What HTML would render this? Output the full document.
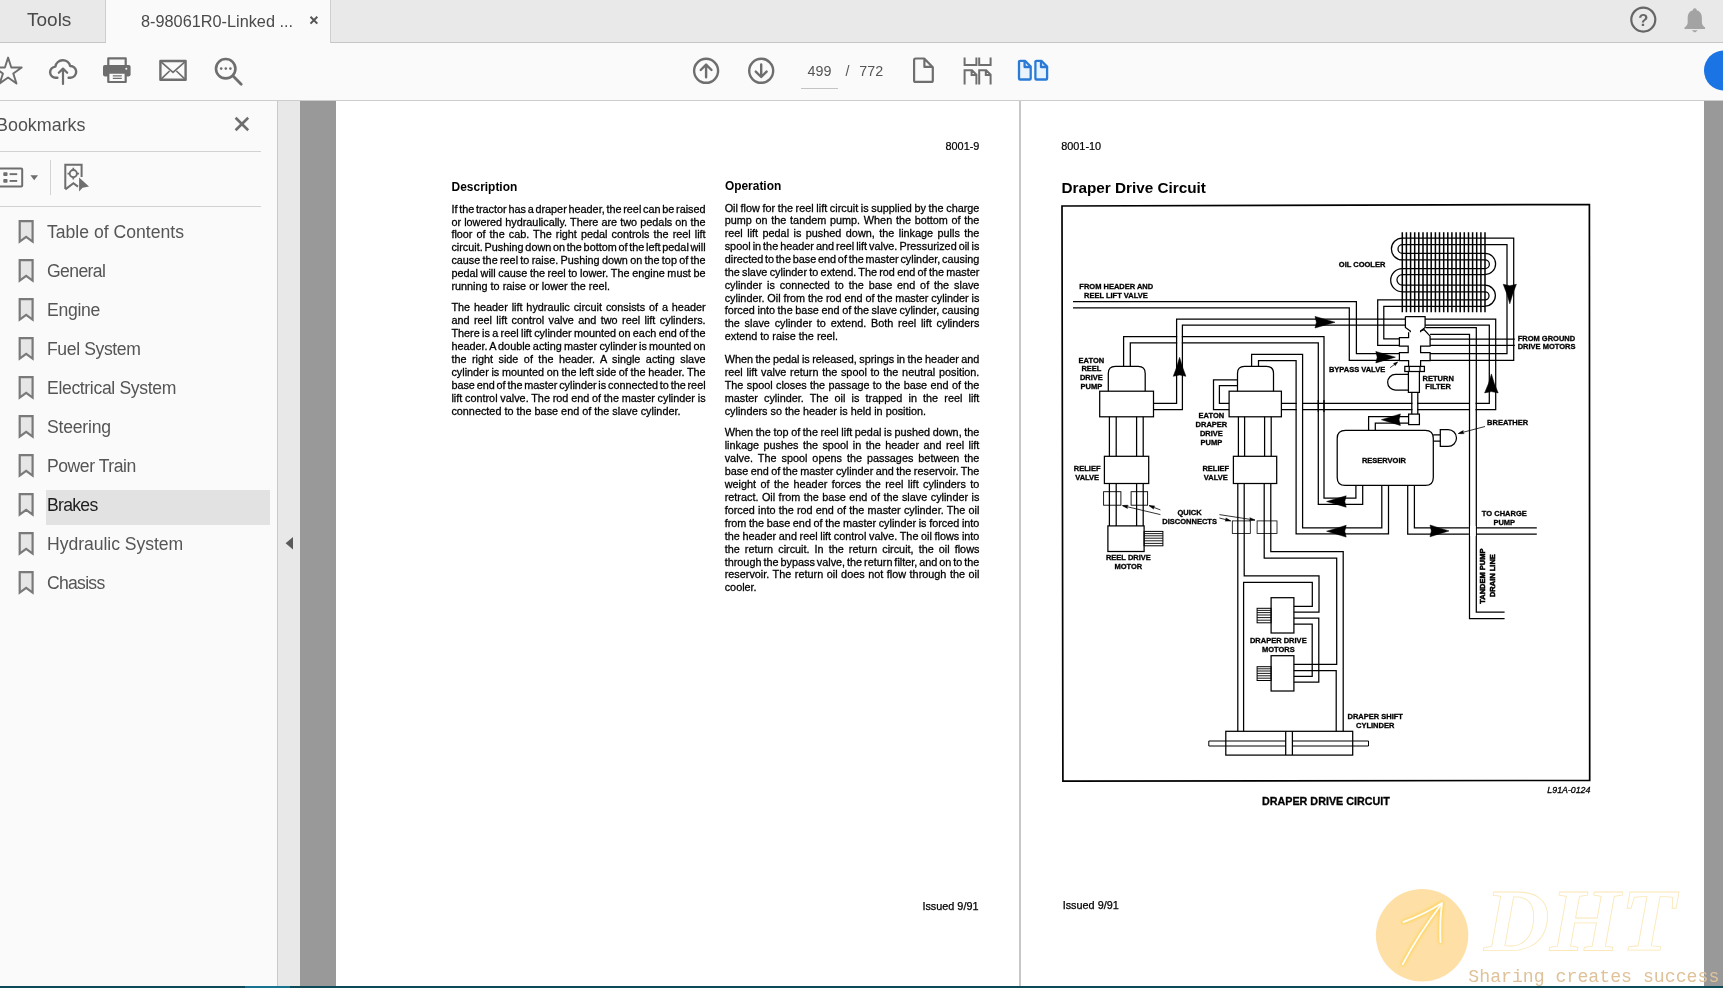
<!DOCTYPE html>
<html lang="en">
<head>
<meta charset="utf-8">
<title>8-98061R0-Linked</title>
<style>
*{box-sizing:border-box;margin:0;padding:0}
html,body{width:1723px;height:988px;overflow:hidden;background:#fff}
body{position:relative;font-family:"Liberation Sans",sans-serif;color:#4b4b4b}
.abs{position:absolute}
#tabbar{left:0;top:0;width:1723px;height:43px;background:#e9e9e9;border-bottom:1px solid #c6c6c6}
#tabTools{left:0;top:0;width:106px;height:42px;border-right:1px solid #cfcfcf}
#tabDoc{left:106px;top:0;width:225px;height:43px;background:#fafafa;border-right:1px solid #cfcfcf}
.tabtxt{white-space:pre;color:#4a4a4a}
#toolbar{left:0;top:43px;width:1723px;height:58px;background:#fafafa;border-bottom:1px solid #cdcdcd}
#side{left:0;top:101px;width:278px;height:887px;background:#fafafa;border-right:1px solid #c9c9c9}
#strip{left:278px;top:101px;width:22px;height:887px;background:#e8e8e8}
#gutL{left:300px;top:101px;width:36px;height:887px;background:#999}
#gutR{left:1704px;top:101px;width:19px;height:887px;background:#999}
#pages{left:336px;top:101px;width:1368px;height:887px;background:#fff}
#pdiv{left:1019px;top:101px;width:2px;height:887px;background:#c8c8c8}
.hr{height:1px;background:#d2d2d2;left:0;width:261px}
.bm{left:47px;font-size:17.6px;color:#555;white-space:pre;line-height:22px}
.bmi{left:18px;width:16px;height:23px}
.doc{color:#000;white-space:pre}
.ln{position:absolute;white-space:pre;color:#000;font-size:10.85px;line-height:13px;height:13px;-webkit-text-stroke:.28px #000}
#botline{left:0;top:986px;width:1723px;height:2px;background:#0d4a57}
</style>
</head>
<body>
<div id="root" class="abs" style="left:0;top:0;width:1723px;height:988px;will-change:transform;overflow:hidden">
<!-- TAB BAR -->
<div id="tabbar" class="abs"></div>
<div id="tabTools" class="abs"></div>
<div id="tabDoc" class="abs"></div>
<div class="abs tabtxt" style="left:27px;top:9px;font-size:19px;line-height:22px">Tools</div>
<div class="abs tabtxt" style="left:141px;top:11px;font-size:16.3px;line-height:20px">8-98061R0-Linked ...</div>
<!-- TOOLBAR -->
<div id="toolbar" class="abs"></div>
<div class="abs tabtxt" style="left:807.600px;top:63.300px;font-size:14.300px;line-height:17px;color:#555">499</div>
<div class="abs tabtxt" style="left:845.500px;top:63.300px;font-size:14.300px;line-height:17px;color:#555">/</div>
<div class="abs tabtxt" style="left:859.300px;top:63.300px;font-size:14.300px;line-height:17px;color:#555">772</div>
<div class="abs" style="left:800.500px;top:88px;width:37px;height:1px;background:#c4c4c4"></div>
<!-- SIDEBAR -->
<div id="side" class="abs"></div>
<div id="strip" class="abs"></div>
<div id="gutL" class="abs"></div>
<div id="pages" class="abs"></div>
<div id="pdiv" class="abs"></div>
<div id="gutR" class="abs"></div>
<div class="abs" style="left:-4px;top:114.300px;font-size:17.900px;line-height:22px;color:#505050;white-space:pre">Bookmarks</div>
<div class="abs hr" style="top:151px"></div><div class="abs hr" style="top:206px"></div>
<div class="abs" style="left:46px;top:490px;width:224px;height:35px;background:#e2e2e2"></div>
<div class="abs bm" style="top:220.8px;color:#555;letter-spacing:0.00px">Table of Contents</div><svg class="abs" style="left:17px;top:218.9px" width="19" height="26" viewBox="0 0 19 26"><path d="M2.700 2.100H15.600V22.600L9.150 17.800L2.700 22.600Z" fill="#e6e6e6" stroke="#7a7a7a" stroke-width="2.200" stroke-linejoin="miter"/></svg>
<div class="abs bm" style="top:259.8px;color:#555;letter-spacing:-0.61px">General</div><svg class="abs" style="left:17px;top:257.9px" width="19" height="26" viewBox="0 0 19 26"><path d="M2.700 2.100H15.600V22.600L9.150 17.800L2.700 22.600Z" fill="#e6e6e6" stroke="#7a7a7a" stroke-width="2.200" stroke-linejoin="miter"/></svg>
<div class="abs bm" style="top:298.8px;color:#555;letter-spacing:-0.28px">Engine</div><svg class="abs" style="left:17px;top:296.9px" width="19" height="26" viewBox="0 0 19 26"><path d="M2.700 2.100H15.600V22.600L9.150 17.800L2.700 22.600Z" fill="#e6e6e6" stroke="#7a7a7a" stroke-width="2.200" stroke-linejoin="miter"/></svg>
<div class="abs bm" style="top:337.8px;color:#555;letter-spacing:-0.39px">Fuel System</div><svg class="abs" style="left:17px;top:335.9px" width="19" height="26" viewBox="0 0 19 26"><path d="M2.700 2.100H15.600V22.600L9.150 17.800L2.700 22.600Z" fill="#e6e6e6" stroke="#7a7a7a" stroke-width="2.200" stroke-linejoin="miter"/></svg>
<div class="abs bm" style="top:376.8px;color:#555;letter-spacing:-0.35px">Electrical System</div><svg class="abs" style="left:17px;top:374.9px" width="19" height="26" viewBox="0 0 19 26"><path d="M2.700 2.100H15.600V22.600L9.150 17.800L2.700 22.600Z" fill="#e6e6e6" stroke="#7a7a7a" stroke-width="2.200" stroke-linejoin="miter"/></svg>
<div class="abs bm" style="top:415.8px;color:#555;letter-spacing:-0.21px">Steering</div><svg class="abs" style="left:17px;top:413.9px" width="19" height="26" viewBox="0 0 19 26"><path d="M2.700 2.100H15.600V22.600L9.150 17.800L2.700 22.600Z" fill="#e6e6e6" stroke="#7a7a7a" stroke-width="2.200" stroke-linejoin="miter"/></svg>
<div class="abs bm" style="top:454.8px;color:#555;letter-spacing:-0.46px">Power Train</div><svg class="abs" style="left:17px;top:452.9px" width="19" height="26" viewBox="0 0 19 26"><path d="M2.700 2.100H15.600V22.600L9.150 17.800L2.700 22.600Z" fill="#e6e6e6" stroke="#7a7a7a" stroke-width="2.200" stroke-linejoin="miter"/></svg>
<div class="abs bm" style="top:493.8px;color:#1e1e1e;letter-spacing:-0.71px">Brakes</div><svg class="abs" style="left:17px;top:491.9px" width="19" height="26" viewBox="0 0 19 26"><path d="M2.700 2.100H15.600V22.600L9.150 17.800L2.700 22.600Z" fill="#e6e6e6" stroke="#7a7a7a" stroke-width="2.200" stroke-linejoin="miter"/></svg>
<div class="abs bm" style="top:532.8px;color:#555;letter-spacing:-0.05px">Hydraulic System</div><svg class="abs" style="left:17px;top:530.9px" width="19" height="26" viewBox="0 0 19 26"><path d="M2.700 2.100H15.600V22.600L9.150 17.800L2.700 22.600Z" fill="#e6e6e6" stroke="#7a7a7a" stroke-width="2.200" stroke-linejoin="miter"/></svg>
<div class="abs bm" style="top:571.8px;color:#555;letter-spacing:-0.73px">Chasiss</div><svg class="abs" style="left:17px;top:569.9px" width="19" height="26" viewBox="0 0 19 26"><path d="M2.700 2.100H15.600V22.600L9.150 17.800L2.700 22.600Z" fill="#e6e6e6" stroke="#7a7a7a" stroke-width="2.200" stroke-linejoin="miter"/></svg>

<div class="abs doc" style="left:451.6px;top:180.2px;font-size:11.95px;line-height:14px;font-weight:bold">Description</div>
<div class="abs doc" style="left:945.5px;top:139.9px;font-size:10.9px;-webkit-text-stroke:.2px #000;line-height:13px">8001-9</div>
<div class="ln" style="left:451.4px;top:202.70px;word-spacing:-1.277px">If the tractor has a draper header, the reel can be raised</div>
<div class="ln" style="left:451.4px;top:215.55px;word-spacing:0.103px">or lowered hydraulically. There are two pedals on the</div>
<div class="ln" style="left:451.4px;top:228.40px;word-spacing:1.028px">floor of the cab. The right pedal controls the reel lift</div>
<div class="ln" style="left:451.4px;top:241.25px;word-spacing:-1.283px">circuit. Pushing down on the bottom of the left pedal will</div>
<div class="ln" style="left:451.4px;top:254.10px;word-spacing:-0.730px">cause the reel to raise. Pushing down on the top of the</div>
<div class="ln" style="left:451.4px;top:266.95px;word-spacing:-0.360px">pedal will cause the reel to lower. The engine must be</div>
<div class="ln" style="left:451.4px;top:279.80px;word-spacing:0.000px">running to raise or lower the reel.</div>
<div class="ln" style="left:451.4px;top:301.20px;word-spacing:0.884px">The header lift hydraulic circuit consists of a header</div>
<div class="ln" style="left:451.4px;top:314.13px;word-spacing:1.390px">and reel lift control valve and two reel lift cylinders.</div>
<div class="ln" style="left:451.4px;top:327.06px;word-spacing:-0.674px">There is a reel lift cylinder mounted on each end of the</div>
<div class="ln" style="left:451.4px;top:339.99px;word-spacing:-0.778px">header. A double acting master cylinder is mounted on</div>
<div class="ln" style="left:451.4px;top:352.92px;word-spacing:2.456px">the right side of the header. A single acting slave</div>
<div class="ln" style="left:451.4px;top:365.85px;word-spacing:-0.361px">cylinder is mounted on the left side of the header. The</div>
<div class="ln" style="left:451.4px;top:378.78px;word-spacing:-1.224px">base end of the master cylinder is connected to the reel</div>
<div class="ln" style="left:451.4px;top:391.71px;word-spacing:-0.236px">lift control valve. The rod end of the master cylinder is</div>
<div class="ln" style="left:451.4px;top:404.64px;word-spacing:0.000px">connected to the base end of the slave cylinder.</div>
<div class="abs doc" style="left:922.4px;top:899.6px;font-size:10.85px;-webkit-text-stroke:.25px #000;line-height:13px">Issued 9/91</div>

<div class="abs doc" style="left:724.9px;top:178.9px;font-size:11.95px;line-height:14px;font-weight:bold">Operation</div>
<div class="ln" style="left:724.7px;top:201.50px;word-spacing:-0.351px">Oil flow for the reel lift circuit is supplied by the charge</div>
<div class="ln" style="left:724.7px;top:214.37px;word-spacing:0.705px">pump on the tandem pump. When the bottom of the</div>
<div class="ln" style="left:724.7px;top:227.24px;word-spacing:1.441px">reel lift pedal is pushed down, the linkage pulls the</div>
<div class="ln" style="left:724.7px;top:240.11px;word-spacing:-0.991px">spool in the header and reel lift valve. Pressurized oil is</div>
<div class="ln" style="left:724.7px;top:252.98px;word-spacing:-1.238px">directed to the base end of the master cylinder, causing</div>
<div class="ln" style="left:724.7px;top:265.85px;word-spacing:-0.732px">the slave cylinder to extend. The rod end of the master</div>
<div class="ln" style="left:724.7px;top:278.72px;word-spacing:1.909px">cylinder is connected to the base end of the slave</div>
<div class="ln" style="left:724.7px;top:291.59px;word-spacing:-0.146px">cylinder. Oil from the rod end of the master cylinder is</div>
<div class="ln" style="left:724.7px;top:304.46px;word-spacing:-0.368px">forced into the base end of the slave cylinder, causing</div>
<div class="ln" style="left:724.7px;top:317.33px;word-spacing:1.775px">the slave cylinder to extend. Both reel lift cylinders</div>
<div class="ln" style="left:724.7px;top:330.20px;word-spacing:0.000px">extend to raise the reel.</div>
<div class="ln" style="left:724.7px;top:353.00px;word-spacing:-0.570px">When the pedal is released, springs in the header and</div>
<div class="ln" style="left:724.7px;top:365.90px;word-spacing:0.706px">reel lift valve return the spool to the neutral position.</div>
<div class="ln" style="left:724.7px;top:378.80px;word-spacing:0.331px">The spool closes the passage to the base end of the</div>
<div class="ln" style="left:724.7px;top:391.70px;word-spacing:3.142px">master cylinder. The oil is trapped in the reel lift</div>
<div class="ln" style="left:724.7px;top:404.60px;word-spacing:0.000px">cylinders so the header is held in position.</div>
<div class="ln" style="left:724.7px;top:426.10px;word-spacing:-0.355px">When the top of the reel lift pedal is pushed down, the</div>
<div class="ln" style="left:724.7px;top:439.04px;word-spacing:1.439px">linkage pushes the spool in the header and reel lift</div>
<div class="ln" style="left:724.7px;top:451.98px;word-spacing:1.964px">valve. The spool opens the passages between the</div>
<div class="ln" style="left:724.7px;top:464.92px;word-spacing:-0.544px">base end of the master cylinder and the reservoir. The</div>
<div class="ln" style="left:724.7px;top:477.86px;word-spacing:1.444px">weight of the header forces the reel lift cylinders to</div>
<div class="ln" style="left:724.7px;top:490.80px;word-spacing:0.457px">retract. Oil from the base end of the slave cylinder is</div>
<div class="ln" style="left:724.7px;top:503.74px;word-spacing:0.173px">forced into the rod end of the master cylinder. The oil</div>
<div class="ln" style="left:724.7px;top:516.68px;word-spacing:-0.388px">from the base end of the master cylinder is forced into</div>
<div class="ln" style="left:724.7px;top:529.62px;word-spacing:-0.369px">the header and reel lift control valve. The oil flows into</div>
<div class="ln" style="left:724.7px;top:542.56px;word-spacing:2.050px">the return circuit. In the return circuit, the oil flows</div>
<div class="ln" style="left:724.7px;top:555.50px;word-spacing:-1.055px">through the bypass valve, the return filter, and on to the</div>
<div class="ln" style="left:724.7px;top:568.44px;word-spacing:0.527px">reservoir. The return oil does not flow through the oil</div>
<div class="ln" style="left:724.7px;top:581.38px;word-spacing:0.000px">cooler.</div>
<div class="abs doc" style="left:1061.2px;top:139.9px;font-size:10.9px;-webkit-text-stroke:.2px #000;line-height:13px">8001-10</div>
<div class="abs doc" style="left:1061.4px;top:179.1px;font-size:15.3px;line-height:18px;font-weight:bold">Draper Drive Circuit</div>
<div class="abs doc" style="left:1062.7px;top:898.6px;font-size:10.85px;-webkit-text-stroke:.25px #000;line-height:13px">Issued 9/91</div>

<svg class="abs" style="left:0;top:0" width="1723" height="988" viewBox="0 0 1723 988" fill="none" stroke="#000" font-family="Liberation Sans, sans-serif" font-weight="bold">
<g><path d="M1062 206L1589.4 204.5L1589.7 780.4L1062.9 781.2Z" stroke-width="1.7" />
<path d="M1123.6 366.4V336.6H1324V498.1H1355.9V485.4" stroke-width="1.25" />
<path d="M1130.3 366.4V342.9H1318.3V504.4H1362.7V485.4" stroke-width="1.25" />
<path d="M1281.4 403.4H1489.3V325.2H1425.1" stroke-width="1.25" />
<path d="M1281.4 409.6H1495.7V319H1425.1" stroke-width="1.25" />
<rect x="1296.7" y="402.0" width="5.3" height="9.0" fill="#fff" stroke="none"/>
<rect x="1412.4" y="402.0" width="4.8" height="9.0" fill="#fff" stroke="none"/>
<rect x="1469.9" y="402.0" width="5.6" height="9.0" fill="#fff" stroke="none"/>
<path d="M1324 400V412M1318.3 400V412" stroke-width="1.25" />
<path d="M1073 301.7H1356.4V353.7H1399.4" stroke-width="1.25" />
<path d="M1073 307.9H1349.3V360.3H1399.4" stroke-width="1.25" />
<rect x="1177.2" y="335.0" width="4.6" height="9.5" fill="#fff" stroke="none"/>
<path d="M1153.5 403.4H1176.6V319H1405.4" stroke-width="1.25" />
<path d="M1153.5 409.6H1182.4V325.2H1405.4" stroke-width="1.25" />
<path d="M1179.6 357.3L1182.6 367.2L1185.9 376.3L1179.6 375.0L1173.3 376.3L1176.6 367.2Z" fill="#000" stroke="#000" stroke-width="0.5" stroke-linejoin="round"/>
<path d="M1335.0 322.2L1324.6 325.2L1315.0 328.0L1316.4 322.2L1315.0 316.4L1324.6 319.2Z" fill="#000" stroke="#000" stroke-width="0.5" stroke-linejoin="round"/>
<path d="M1108.3 391.2V373.4Q1108.3 366.4 1115.3 366.4H1138.2Q1145.2 366.4 1145.2 373.4V391.2" stroke-width="1.25" />
<rect x="1099.7" y="391.2" width="53.8" height="25.6" stroke-width="1.25" fill="none"/>
<path d="M1109.4 416.8V456.3M1116.2 416.8V456.3M1136.6 416.8V456.3M1143.2 416.8V456.3" stroke-width="1.25" />
<rect x="1104.4" y="456.3" width="44.3" height="27.2" stroke-width="1.25" fill="none"/>
<path d="M1109.4 483.5V525.9M1116.2 483.5V525.9M1136.6 483.5V525.9M1143.2 483.5V525.9" stroke-width="1.25" />
<rect x="1103.6" y="491.7" width="17.3" height="13.5" stroke-width="0.9" fill="none"/>
<rect x="1131.1" y="491.7" width="16.5" height="13.5" stroke-width="0.9" fill="none"/>
<rect x="1107.9" y="525.9" width="36.2" height="25.6" stroke-width="1.25" fill="none"/>
<rect x="1144.1" y="531.4" width="18.8" height="14.4" stroke-width="1.0" fill="none"/>
<path d="M1144.1 533.6H1162.9M1144.1 535.8H1162.9M1144.1 538.2H1162.9M1144.1 540.8H1162.9M1144.1 543.4H1162.9" stroke-width="0.9" />
<path d="M1237.5 391.2V373.4Q1237.5 366.4 1244.5 366.4H1266.5Q1273.5 366.4 1273.5 373.4V391.2" stroke-width="1.25" />
<rect x="1229.1" y="391.2" width="52.3" height="25.6" stroke-width="1.25" fill="none"/>
<path d="M1237.5 379.9H1213.5V409.6H1229.1M1237.5 385.7H1219.4V403.4H1229.1" stroke-width="1.25" />
<path d="M1251.6 366.4V354.3H1302.6V527.8H1381.8V485.4" stroke-width="1.25" />
<path d="M1258.5 366.4V360.6H1296.1V533.9H1388.5V485.4" stroke-width="1.25" />
<path d="M1238.4 416.8V456.3M1244.6 416.8V456.3M1264.6 416.8V456.3M1271.2 416.8V456.3" stroke-width="1.25" />
<rect x="1233.4" y="456.3" width="43.3" height="27.2" stroke-width="1.25" fill="none"/>
<path d="M1237.8 483.5V731.3" stroke-width="1.25" />
<path d="M1244.2 483.5V575.8H1319V612.2H1293.9" stroke-width="1.25" />
<path d="M1243.6 731.3V582.3H1312.3V606.3H1293.9" stroke-width="1.25" />
<path d="M1270.8 483.5V551.6H1343.2V731.3" stroke-width="1.25" />
<path d="M1264.2 483.5V558.1H1336.7V664.3H1293.9" stroke-width="1.25" />
<path d="M1293.9 670.6H1336.2V731.3" stroke-width="1.25" />
<rect x="1232.3" y="520.9" width="18.0" height="12.5" stroke-width="0.8" fill="none"/>
<rect x="1257.1" y="520.9" width="19.9" height="12.5" stroke-width="0.8" fill="none"/>
<rect x="1271.1" y="597.7" width="22.8" height="35.3" stroke-width="1.25" fill="none"/>
<rect x="1271.1" y="655.7" width="22.8" height="35.3" stroke-width="1.25" fill="none"/>
<rect x="1257.1" y="608.3" width="14.0" height="14.5" stroke-width="1.0" fill="none"/>
<rect x="1257.1" y="666.7" width="14.0" height="13.8" stroke-width="1.0" fill="none"/>
<path d="M1257.1 610.4H1271.1M1257.1 612.6H1271.1M1257.1 615H1271.1M1257.1 617.6H1271.1M1257.1 620.2H1271.1" stroke-width="0.9" />
<path d="M1257.1 668.8H1271.1M1257.1 671H1271.1M1257.1 673.4H1271.1M1257.1 675.8H1271.1M1257.1 678.2H1271.1" stroke-width="0.9" />
<path d="M1293.9 618H1318.8V682.1H1293.9M1293.9 624H1312.2V676.4H1293.9" stroke-width="1.25" />
<rect x="1225.8" y="731.3" width="126.9" height="23.8" stroke-width="1.25" fill="none"/>
<path d="M1285.7 731.3V755.1M1292.4 731.3V755.1" stroke-width="1.25" />
<path d="M1225.8 741H1208.8V746H1225.8M1352.7 741H1368.5V746H1352.7M1225.8 741H1285.7M1225.8 746H1285.7M1292.4 741H1352.7M1292.4 746H1352.7" stroke-width="1.0" />
<path d="M1402.3 232.2V312.2M1406.4 232.2V312.2M1410.6 232.2V312.2M1414.7 232.2V312.2M1418.8 232.2V312.2M1423.0 232.2V312.2M1427.1 232.2V312.2M1431.2 232.2V312.2M1435.4 232.2V312.2M1439.5 232.2V312.2M1443.7 232.2V312.2M1447.8 232.2V312.2M1451.9 232.2V312.2M1456.1 232.2V312.2M1460.2 232.2V312.2M1464.3 232.2V312.2M1468.5 232.2V312.2M1472.6 232.2V312.2M1476.7 232.2V312.2M1480.9 232.2V312.2M1485.0 232.2V312.2" stroke-width="1.5" />
<path d="M1402.3 238.1H1513.7V360.3H1430.1M1402.3 244.7H1507V353.7H1430.1" stroke-width="1.25" />
<path d="M1402.3 238.1A10.9 10.9 0 0 0 1402.3 259.9M1402.3 244.7A4.3 4.3 0 0 0 1402.3 253.3" stroke-width="1.25" />
<path d="M1402.3 253.3H1485M1402.3 259.9H1485" stroke-width="1.25" />
<path d="M1485 253.3A10.6 10.6 0 0 1 1485 274.5M1485 259.9A4.35 4.35 0 0 1 1485 268.6" stroke-width="1.25" />
<path d="M1402.3 268.6H1485M1402.3 274.5H1485" stroke-width="1.25" />
<path d="M1402.3 268.6A11.6 11.6 0 0 0 1402.3 291.8M1402.3 274.5A5.35 5.35 0 0 0 1402.3 285.2" stroke-width="1.25" />
<path d="M1402.3 285.2H1485M1402.3 291.8H1485" stroke-width="1.25" />
<path d="M1485 285.2A10.4 10.4 0 0 1 1485 306M1485 291.8A4.05 4.05 0 0 1 1485 299.9" stroke-width="1.25" />
<path d="M1485 299.9H1377.7V345.3H1399.4M1485 306.4H1383.8V338.9H1399.4" stroke-width="1.25" />
<path d="M1509.8 303.8L1506.8 293.7L1503.2 284.3L1509.8 285.7L1516.4 284.3L1512.8 293.7Z" fill="#000" stroke="#000" stroke-width="0.5" stroke-linejoin="round"/>
<path d="M1405.4 316.6H1425.1V327.5L1420.6 331V332.2M1405.4 316.6V327.5L1410.3 331V332.2" stroke-width="1.25" />
<path d="M1408.6 332.2V337.7H1399.4V346.1H1408.2V352.5H1399.4V360.7H1408.6V366.4" stroke-width="1.25" />
<path d="M1420.6 331L1424 329.6L1430.1 336.2V346.1H1420.6V352.5H1430.1V360.7H1420.6V366.4" stroke-width="1.25" />
<rect x="1404.8" y="366.4" width="19.6" height="5.1" stroke-width="1.25" fill="none"/>
<path d="M1409.2 366.4V371.5M1420 366.4V371.5" stroke-width="1.25" />
<path d="M1408.4 371.5V392.3H1419.4V371.5" stroke-width="1.25" />
<path d="M1408.4 374.4H1395.5A7.85 7.85 0 0 0 1395.5 390.1H1408.4" stroke-width="1.25" />
<path d="M1411.8 392.3V414.1M1417.8 392.3V414.1" stroke-width="1.25" />
<rect x="1408.6" y="414.1" width="10.8" height="10.5" stroke-width="1.25" fill="none"/>
<path d="M1408.6 416.5H1368.6V430.4M1408.6 423H1375.3V430.4" stroke-width="1.25" />
<path d="M1381.4 419.7L1391.3 416.7L1400.4 413.9L1399.1 419.7L1400.4 425.5L1391.3 422.7Z" fill="#000" stroke="#000" stroke-width="0.5" stroke-linejoin="round"/>
<path d="M1425.6 327.7H1476.3V612.2H1504.6M1430.1 334.3H1469.5V618.6H1504.6" stroke-width="1.25" />
<path d="M1514.8 339.2H1430.1M1514.8 345.3H1430.1" stroke-width="1.25" />
<path d="M1395.4 357.2L1385.2 360.2L1375.8 362.9L1377.2 357.2L1375.8 351.5L1385.2 354.2Z" fill="#000" stroke="#000" stroke-width="0.5" stroke-linejoin="round"/>
<path d="M1491.4 373.9L1494.4 383.8L1498.2 392.9L1491.4 391.6L1484.6 392.9L1488.4 383.8Z" fill="#000" stroke="#000" stroke-width="0.5" stroke-linejoin="round"/>
<path d="M1345.6 430.4H1425.3Q1433.3 430.4 1433.3 438.4V477.4Q1433.3 485.4 1425.3 485.4H1345.2Q1337.2 485.4 1337.2 477.4V438.4Q1337.2 430.4 1345.6 430.4Z" stroke-width="1.25" />
<path d="M1433.3 434.8H1440.3M1433.3 441.1H1440.3" stroke-width="1.25" />
<path d="M1440.3 429.6H1448.1A8.4 8.4 0 0 1 1448.1 446.4H1440.3Z" stroke-width="1.25" />
<rect x="1470.1" y="526.0" width="5.6" height="10.0" fill="#fff" stroke="none"/>
<path d="M1407.7 485.4V534.1H1468.9M1476.3 534.1H1536.8M1414.4 485.4V527.8H1468.9M1476.3 527.8H1536.8" stroke-width="1.25" />
<path d="M1449.0 530.9L1439.1 533.9L1430.0 536.8L1431.3 530.9L1430.0 525.0L1439.1 527.9Z" fill="#000" stroke="#000" stroke-width="0.5" stroke-linejoin="round"/>
<path d="M1326.6 501.5L1336.8 498.5L1346.2 495.8L1344.8 501.5L1346.2 507.2L1336.8 504.5Z" fill="#000" stroke="#000" stroke-width="0.5" stroke-linejoin="round"/>
<path d="M1326.6 531.2L1336.8 528.2L1346.2 525.3L1344.8 531.2L1346.2 537.1L1336.8 534.2Z" fill="#000" stroke="#000" stroke-width="0.5" stroke-linejoin="round"/>
<path d="M1160.4 514.6L1122.5 505.6" stroke-width="0.8" />
<path d="M1122.5 505.6L1125.5 505.3L1128.2 505.3L1127.0 506.7L1127.5 508.4L1125.1 507.2Z" fill="#000" stroke="#000" stroke-width="0.5" stroke-linejoin="round"/>
<path d="M1160.4 509.9L1149.1 505.6" stroke-width="0.8" />
<path d="M1149.1 505.6L1152.1 505.7L1154.8 506.1L1153.5 507.3L1153.7 509.1L1151.4 507.5Z" fill="#000" stroke="#000" stroke-width="0.5" stroke-linejoin="round"/>
<path d="M1219.4 514.6L1255 520.1" stroke-width="0.8" />
<path d="M1255.0 520.1L1252.0 520.6L1249.3 520.8L1250.4 519.4L1249.8 517.7L1252.3 518.7Z" fill="#000" stroke="#000" stroke-width="0.5" stroke-linejoin="round"/>
<path d="M1219.4 518L1230.7 520.9" stroke-width="0.8" />
<path d="M1230.7 520.9L1227.7 521.1L1225.0 521.1L1226.2 519.7L1225.8 518.0L1228.2 519.3Z" fill="#000" stroke="#000" stroke-width="0.5" stroke-linejoin="round"/>
<path d="M1485 426.5L1458.4 433.5" stroke-width="0.8" />
<path d="M1458.4 433.5L1460.9 431.8L1463.3 430.6L1462.9 432.3L1464.1 433.6L1461.4 433.7Z" fill="#000" stroke="#000" stroke-width="0.5" stroke-linejoin="round"/>
<path d="M1390.1 367.7L1397.5 362.2" stroke-width="0.8" />
<path d="M1397.5 362.2L1396.3 364.1L1395.1 365.7L1394.8 364.2L1393.5 363.5L1395.3 362.8Z" fill="#000" stroke="#000" stroke-width="0.5" stroke-linejoin="round"/>
<text fill="#000" stroke="#000" stroke-width="0.3" x="1079.3" y="289.4" text-anchor="start" font-size="7.5" >FROM HEADER AND</text>
<text fill="#000" stroke="#000" stroke-width="0.3" x="1084.0" y="298.0" text-anchor="start" font-size="7.5" >REEL LIFT VALVE</text>
<text fill="#000" stroke="#000" stroke-width="0.3" x="1091.4" y="362.5" text-anchor="middle" font-size="7.5" >EATON</text>
<text fill="#000" stroke="#000" stroke-width="0.3" x="1091.4" y="371.1" text-anchor="middle" font-size="7.5" >REEL</text>
<text fill="#000" stroke="#000" stroke-width="0.3" x="1091.4" y="379.9" text-anchor="middle" font-size="7.5" >DRIVE</text>
<text fill="#000" stroke="#000" stroke-width="0.3" x="1091.4" y="388.5" text-anchor="middle" font-size="7.5" >PUMP</text>
<text fill="#000" stroke="#000" stroke-width="0.3" x="1211.4" y="417.9" text-anchor="middle" font-size="7.5" >EATON</text>
<text fill="#000" stroke="#000" stroke-width="0.3" x="1211.4" y="426.5" text-anchor="middle" font-size="7.5" >DRAPER</text>
<text fill="#000" stroke="#000" stroke-width="0.3" x="1211.4" y="435.6" text-anchor="middle" font-size="7.5" >DRIVE</text>
<text fill="#000" stroke="#000" stroke-width="0.3" x="1211.4" y="444.5" text-anchor="middle" font-size="7.5" >PUMP</text>
<text fill="#000" stroke="#000" stroke-width="0.3" x="1087.2" y="470.9" text-anchor="middle" font-size="7.5" >RELIEF</text>
<text fill="#000" stroke="#000" stroke-width="0.3" x="1087.2" y="479.5" text-anchor="middle" font-size="7.5" >VALVE</text>
<text fill="#000" stroke="#000" stroke-width="0.3" x="1215.8" y="470.9" text-anchor="middle" font-size="7.5" >RELIEF</text>
<text fill="#000" stroke="#000" stroke-width="0.3" x="1215.8" y="479.5" text-anchor="middle" font-size="7.5" >VALVE</text>
<text fill="#000" stroke="#000" stroke-width="0.3" x="1128.4" y="559.9" text-anchor="middle" font-size="7.5" >REEL DRIVE</text>
<text fill="#000" stroke="#000" stroke-width="0.3" x="1128.4" y="568.6" text-anchor="middle" font-size="7.5" >MOTOR</text>
<text fill="#000" stroke="#000" stroke-width="0.3" x="1189.6" y="515.4" text-anchor="middle" font-size="7.5" >QUICK</text>
<text fill="#000" stroke="#000" stroke-width="0.3" x="1189.6" y="524.0" text-anchor="middle" font-size="7.5" >DISCONNECTS</text>
<text fill="#000" stroke="#000" stroke-width="0.3" x="1338.8" y="267.0" text-anchor="start" font-size="7.5" >OIL COOLER</text>
<text fill="#000" stroke="#000" stroke-width="0.3" x="1517.7" y="340.7" text-anchor="start" font-size="7.5" >FROM GROUND</text>
<text fill="#000" stroke="#000" stroke-width="0.3" x="1517.7" y="349.4" text-anchor="start" font-size="7.5" >DRIVE MOTORS</text>
<text fill="#000" stroke="#000" stroke-width="0.3" x="1328.9" y="372.0" text-anchor="start" font-size="7.5" >BYPASS VALVE</text>
<text fill="#000" stroke="#000" stroke-width="0.3" x="1438.2" y="380.5" text-anchor="middle" font-size="7.5" >RETURN</text>
<text fill="#000" stroke="#000" stroke-width="0.3" x="1438.2" y="389.3" text-anchor="middle" font-size="7.5" >FILTER</text>
<text fill="#000" stroke="#000" stroke-width="0.3" x="1487.1" y="424.6" text-anchor="start" font-size="7.5" >BREATHER</text>
<text fill="#000" stroke="#000" stroke-width="0.3" x="1361.9" y="462.6" text-anchor="start" font-size="7.5" >RESERVOIR</text>
<text fill="#000" stroke="#000" stroke-width="0.3" x="1504.3" y="515.7" text-anchor="middle" font-size="7.5" >TO CHARGE</text>
<text fill="#000" stroke="#000" stroke-width="0.3" x="1504.3" y="524.6" text-anchor="middle" font-size="7.5" >PUMP</text>
<text fill="#000" stroke="#000" stroke-width="0.3" x="1278.3" y="643.2" text-anchor="middle" font-size="7.5" >DRAPER DRIVE</text>
<text fill="#000" stroke="#000" stroke-width="0.3" x="1278.3" y="652.2" text-anchor="middle" font-size="7.5" >MOTORS</text>
<text fill="#000" stroke="#000" stroke-width="0.3" x="1375.2" y="719.0" text-anchor="middle" font-size="7.5" >DRAPER SHIFT</text>
<text fill="#000" stroke="#000" stroke-width="0.3" x="1375.2" y="727.7" text-anchor="middle" font-size="7.5" >CYLINDER</text>
<text fill="#000" stroke="#000" stroke-width="0.55" transform="translate(1485.4 576.1) rotate(-90)" text-anchor="middle" font-size="7.5">TANDEM PUMP</text>
<text fill="#000" stroke="#000" stroke-width="0.55" transform="translate(1494.8 575.6) rotate(-90)" text-anchor="middle" font-size="7.5">DRAIN LINE</text>
<text fill="#000" stroke="#000" stroke-width="0.3" x="1325.9" y="804.8" text-anchor="middle" font-size="10.75" >DRAPER DRIVE CIRCUIT</text>
<text fill="#000" stroke="#000" stroke-width="0.3" x="1590.4" y="792.7" text-anchor="end" font-size="8.8" font-style="italic" font-weight="normal">L91A-0124</text></g>
</svg>

<svg class="abs" style="left:1360px;top:880px" width="363" height="108" viewBox="1360 880 363 108">
<defs><filter id="glow" x="-30%" y="-30%" width="160%" height="160%"><feGaussianBlur stdDeviation="1.6"/></filter></defs>
<circle cx="1422.1" cy="935.3" r="46.2" fill="#fee0a7"/>
<g fill="none" stroke="#ffd257" stroke-width="4.5" stroke-linecap="round" stroke-linejoin="round" filter="url(#glow)" opacity=".9">
<path d="M1402.700 964.200Q1418 935 1441.500 904"/><path d="M1403.500 922Q1425 914 1442 903Q1439.500 922 1440.500 942"/></g>
<g fill="none" stroke="#fffdf6" stroke-width="1.900" stroke-linecap="round" stroke-linejoin="round">
<path d="M1402.700 964.200Q1418 935 1441.500 904"/><path d="M1403.500 922Q1425 914 1442 903Q1439.500 922 1440.500 942"/></g>
<text x="1484" y="949.500" font-family="Liberation Serif, serif" font-weight="bold" font-style="italic" font-size="89" textLength="192" lengthAdjust="spacingAndGlyphs" fill="none" stroke="#fbe8b8" stroke-width=".8">DHT</text>
</svg>
<div class="abs" style="left:1468.300px;top:966.500px;font-family:'Liberation Mono',monospace;font-size:18.200px;line-height:20px;color:#dfc29a;white-space:pre">Sharing creates success</div>

<svg class="abs" style="left:0;top:0" width="1723" height="988" viewBox="0 0 1723 988" fill="none" stroke="#6e6e6e" stroke-width="2.2" stroke-linejoin="round">
<!-- tab close -->
<path d="M310.5 16.8l6.8 6.8M317.3 16.8l-6.8 6.8" stroke="#555" stroke-width="2"/>
<!-- star -->
<path d="M8.1 57.6 L11.3 67.5 L21.7 67.5 L13.3 73.6 L16.5 83.5 L8.1 77.4 L-0.3 83.5 L2.9 73.6 L-5.5 67.5 L4.9 67.5Z" stroke-linejoin="round" stroke-width="1.9"/>
<!-- cloud upload -->
<path d="M57.4 77.8H56A5.6 5.6 0 0 1 55.4 66.6A7.55 7.55 0 0 1 70.2 66A5.8 5.8 0 0 1 70.4 77.8H68.6" stroke-linecap="round" stroke-width="2.4"/>
<path d="M63 84V69.4M58.8 72.8L63 68.6L67.2 72.8" stroke-linecap="round" stroke-width="2.2"/>
<!-- printer -->
<rect x="108.3" y="58.3" width="17.4" height="8" />
<rect x="103" y="65" width="27.6" height="11.4" rx="1.8" fill="#6e6e6e" stroke="none"/>
<rect x="108.3" y="72.6" width="17.4" height="9.4" fill="#fafafa"/>
<path d="M112.8 75.8h9M112.8 78.3h9" stroke-width="1.3"/>
<circle cx="126.3" cy="68.8" r="1" fill="#fafafa" stroke="none"/>
<!-- mail -->
<rect x="160.4" y="61" width="25.2" height="18.8" stroke-width="2.4"/>
<path d="M160.8 61.6L173 72.4L185.2 61.6M160.8 79.4L169.6 71M185.2 79.4L176.4 71" stroke-width="1.7"/>
<!-- search -->
<circle cx="225.7" cy="68.7" r="9.7" stroke-width="2.6"/>
<path d="M232.8 75.8L241.2 84.2" stroke-width="2.8" stroke-linecap="round"/>
<g fill="#6e6e6e" stroke="none"><circle cx="221.2" cy="68.6" r="1.3"/><circle cx="225.8" cy="68.6" r="1.3"/><circle cx="230.4" cy="68.6" r="1.3"/></g>
<!-- up / down -->
<circle cx="706.1" cy="70.8" r="12" stroke-width="2.4"/>
<path d="M706.1 77.2V65M700.7 70L706.1 64.6L711.5 70" stroke-width="2.4" stroke-linecap="round"/>
<circle cx="761.2" cy="70.8" r="12" stroke-width="2.4"/>
<path d="M761.2 64.4V76.6M755.8 71.6L761.2 77L766.6 71.6" stroke-width="2.4" stroke-linecap="round"/>
<!-- page -->
<path d="M914.1 60V80.4Q914.1 81.9 915.6 81.9H931.3Q932.8 81.9 932.8 80.4V67.2L924.2 58.5H915.6Q914.1 58.5 914.1 60ZM924.4 58.8V66.9H932.6" stroke-width="2.2"/>
<!-- continuous -->
<path d="M964.6 57.4V65H976.4V57.4M979.2 57.4V65H990.6V57.4" stroke-width="2" stroke-linejoin="miter"/>
<path d="M964.6 84.6V70.2H972L976.4 74.6V84.6M971.6 70.4V75H976.2M979.2 84.6V70.2H986.2L990.6 74.6V84.6M985.8 70.4V75H990.4" stroke-width="2" stroke-linejoin="miter"/>
<!-- two page (blue) -->
<g stroke="#2b7bd6" stroke-width="2.3" fill="#e9f3fe">
<path d="M1019 61.6V78.4Q1019 79.5 1020.1 79.5H1029.6Q1030.7 79.5 1030.7 78.4V66.6L1025 60.8H1020.1Q1019 60.8 1019 61.6Z"/>
<path d="M1024.6 61V67H1030.5" fill="none"/>
<path d="M1035.4 61.6V78.4Q1035.4 79.5 1036.5 79.5H1046Q1047.1 79.5 1047.1 78.4V66.6L1041.4 60.8H1036.5Q1035.4 60.8 1035.4 61.6Z"/>
<path d="M1041 61V67H1046.9" fill="none"/>
</g>
<!-- help -->
<circle cx="1643.3" cy="19.6" r="12" stroke="#666" stroke-width="2.2"/>
<!-- bell -->
<path d="M1694.8 8.2c1.2 0 1.9 .8 1.9 2c3.6 1 5.2 4 5.2 7.6v4.6c0 2.2 1.4 3.6 3.2 5v1.6h-20.6v-1.6c1.800 -1.400 3.200 -2.800 3.200 -5v-4.600c0 -3.600 1.600 -6.600 5.200 -7.600c0 -1.200 .7 -2 1.900 -2z" fill="#a3a3a3" stroke="none"/>
<path d="M1691.600 30.200h6.400l-3.200 2.400z" fill="#a3a3a3" stroke="none"/>
<!-- blue circle -->
<circle cx="1724" cy="70.500" r="20" fill="#1b74e4" stroke="none"/>
<!-- sidebar close X -->
<path d="M235.600 117.800L248.200 130.200M248.200 117.800L235.600 130.200" stroke-width="2.600"/>
<!-- list icon -->
<rect x="-3" y="168.400" width="25.200" height="18" rx="1" stroke-width="2"/>
<g fill="#6e6e6e" stroke="none"><rect x="3.300" y="172.200" width="4.200" height="3.800" rx=".8"/><rect x="3.300" y="179" width="4.200" height="3.800" rx=".8"/><rect x="9.600" y="173.200" width="7.600" height="1.900"/><rect x="9.600" y="180" width="7.600" height="1.900"/>
<path d="M30.400 175.200h7.600l-3.800 5z"/></g>
<path d="M50.500 160V195" stroke="#d4d4d4" stroke-width="1"/>
<!-- bookmark find -->
<path d="M65.300 189V164.800H81.600V177" stroke-width="2" stroke-linejoin="miter"/>
<path d="M65.300 189.400L73.400 183.200L78 186.600" stroke-width="2" stroke-linejoin="miter"/>
<circle cx="73.300" cy="173.600" r="3.600" stroke-width="1.900"/>
<path d="M73.300 167.800v2.400M73.300 177v2.400M67.500 173.600h2.400M76.700 173.600h2.400" stroke-width="1.700"/>
<path d="M79.100 177.600V191.400L82.600 187.800L89 186.600Z" fill="#6e6e6e" stroke="none"/>
<!-- collapse arrow -->
<path d="M293 537v12.600l-7.400 -6.300z" fill="#5a5a5a" stroke="none"/>
</svg>
<div class="abs" style="left:1637.800px;top:10px;width:11px;text-align:center;font-size:16.500px;line-height:20px;font-weight:bold;color:#666">?</div>

<div id="botline" class="abs"></div><div class="abs" style="left:245px;top:986px;width:45px;height:2px;background:#17738f"></div>
</div>
</body>
</html>
